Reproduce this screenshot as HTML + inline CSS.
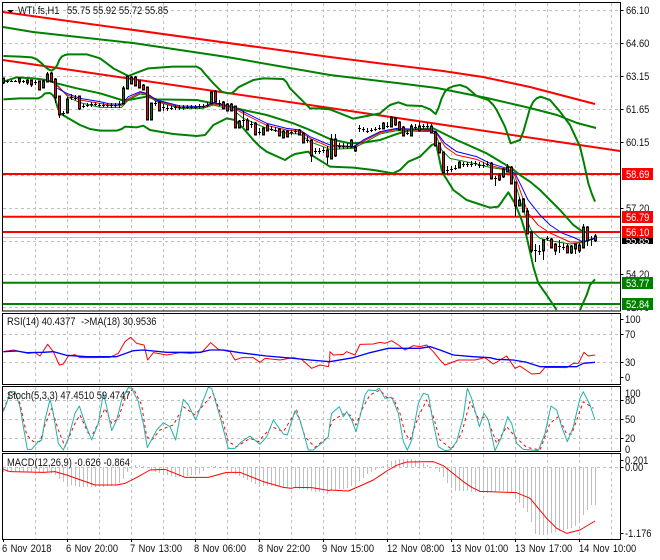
<!DOCTYPE html>
<html><head><meta charset="utf-8"><title>WTI.fs,H1</title>
<style>
html,body{margin:0;padding:0;background:#fff;width:660px;height:560px;overflow:hidden}
svg{display:block}
text{font-family:"Liberation Sans",sans-serif;font-size:11px;fill:#111;transform-box:fill-box;transform-origin:0 50%;transform:scaleX(.85)}
.l{fill:#fff}
.t{word-spacing:1px}
polyline,path{stroke-linejoin:round}
</style></head><body>
<svg width="660" height="560" viewBox="0 0 660 560" xmlns="http://www.w3.org/2000/svg">
<rect width="660" height="560" fill="#fff"/>
<!-- grid -->
<g stroke="#c0c0c0" stroke-width="1" stroke-dasharray="3 3" fill="none">
<path d="M35.5 3V311M67.5 3V311M99.5 3V311M131.5 3V311M163.5 3V311M195.5 3V311M227.5 3V311M259.5 3V311M291.5 3V311M323.5 3V311M355.5 3V311M387.5 3V311M419.5 3V311M451.5 3V311M483.5 3V311M515.5 3V311M547.5 3V311M579.5 3V311M611.5 3V311"/>
<path d="M35.5 313V384M67.5 313V384M99.5 313V384M131.5 313V384M163.5 313V384M195.5 313V384M227.5 313V384M259.5 313V384M291.5 313V384M323.5 313V384M355.5 313V384M387.5 313V384M419.5 313V384M451.5 313V384M483.5 313V384M515.5 313V384M547.5 313V384M579.5 313V384M611.5 313V384"/>
<path d="M35.5 387V451M67.5 387V451M99.5 387V451M131.5 387V451M163.5 387V451M195.5 387V451M227.5 387V451M259.5 387V451M291.5 387V451M323.5 387V451M355.5 387V451M387.5 387V451M419.5 387V451M451.5 387V451M483.5 387V451M515.5 387V451M547.5 387V451M579.5 387V451M611.5 387V451"/>
<path d="M35.5 454V539M67.5 454V539M99.5 454V539M131.5 454V539M163.5 454V539M195.5 454V539M227.5 454V539M259.5 454V539M291.5 454V539M323.5 454V539M355.5 454V539M387.5 454V539M419.5 454V539M451.5 454V539M483.5 454V539M515.5 454V539M547.5 454V539M579.5 454V539M611.5 454V539"/>
<path d="M3 10.5H620M3 43.5H620M3 76.5H620M3 109.5H620M3 142.5H620M3 175.5H620M3 208.5H620M3 241.5H620M3 274.5H620M3 307.5H620"/>
<path d="M3 334.5H620M3 362.5H620M3 400.5H620M3 419.5H620M3 438.5H620M3 467.5H620"/>
</g>
<!-- MACD histogram -->
<path stroke="#c0c0c0" stroke-width="1" fill="none" d="M3.5 467V472M7.5 467V472M11.5 467V472M15.5 467V472M19.5 467V472M23.5 467V472M27.5 467V472M31.5 467V472M35.5 467V472M39.5 467V472M43.5 467V472M47.5 467V472M51.5 467V473M55.5 467V475M59.5 467V479M63.5 467V482M67.5 467V484M71.5 467V485M75.5 467V486M79.5 467V487M83.5 467V487M87.5 467V487M91.5 467V487M95.5 467V487M99.5 467V487M103.5 467V487M107.5 467V486M111.5 467V486M115.5 467V485M119.5 467V483M123.5 467V479M127.5 467V472M131.5 467V468M135.5 467V465M139.5 467V465M143.5 467V466M147.5 467V468M151.5 467V470M155.5 467V472M159.5 467V473M163.5 467V473M167.5 467V475M171.5 467V476M175.5 467V477M179.5 467V477M183.5 467V477M187.5 467V476M191.5 467V475M195.5 467V475M199.5 467V474M203.5 467V471M207.5 467V468M211.5 467V466M215.5 467V466M219.5 467V467M223.5 467V468M227.5 467V470M231.5 467V472M235.5 467V474M239.5 467V476M243.5 467V478M247.5 467V480M251.5 467V482M255.5 467V484M259.5 467V485M263.5 467V486M267.5 467V486M271.5 467V486M275.5 467V486M279.5 467V486M283.5 467V487M287.5 467V488M291.5 467V488M295.5 467V488M299.5 467V489M303.5 467V489M307.5 467V490M311.5 467V491M315.5 467V492M319.5 467V492M323.5 467V493M327.5 467V494M331.5 467V491M335.5 467V490M339.5 467V489M343.5 467V489M347.5 467V488M351.5 467V486M355.5 467V485M359.5 467V481M363.5 467V478M367.5 467V474M371.5 467V472M375.5 467V470M379.5 467V468M383.5 467V466M387.5 467V464M391.5 467V461M395.5 467V460M399.5 467V459M403.5 467V459M407.5 467V459M411.5 467V459M415.5 467V460M419.5 467V461M423.5 467V463M427.5 467V465M431.5 467V467M435.5 467V469M439.5 467V472M443.5 467V477M447.5 467V483M451.5 467V488M455.5 467V491M459.5 467V491M463.5 467V491M467.5 467V491M471.5 467V492M475.5 467V492M479.5 467V492M483.5 467V493M487.5 467V493M491.5 467V492M495.5 467V492M499.5 467V491M503.5 467V491M507.5 467V492M511.5 467V493M515.5 467V498M519.5 467V503M523.5 467V508M527.5 467V512M531.5 467V522M535.5 467V534M539.5 467V535M543.5 467V535M547.5 467V534M551.5 467V533M555.5 467V532M559.5 467V531M563.5 467V530M567.5 467V529M571.5 467V528M575.5 467V526M579.5 467V520M583.5 467V515M587.5 467V510M591.5 467V505M595.5 467V505"/>
<!-- trend lines -->
<g fill="none" stroke-width="2">
<path stroke="#f00" d="M3 12L330 57L377 63L443 71L483 77L530 87L595 104"/>
<path stroke="#f00" d="M3 60L330 108L620 151"/>
<path stroke="#008000" d="M3 27L33 32L133 43L227 57L330 75L397 83L437 88L487 98L530 108L557 115L577 123L596 128"/>
<path stroke="#f00" d="M3 174H620M3 216.7H620M3 232H620"/>
<path stroke="#008000" d="M3 282.7H620M3 304H620"/>
</g>
<path stroke="#c0c0c0" stroke-width="1" d="M3 237.5H620"/>
<!-- Bollinger bands (zoom coords) -->
<g fill="none" stroke="#008000" stroke-width="6" transform="scale(.33333)">
<polyline points="10,168 60,170 95,172 110,178 125,190 135,200 145,208 155,212 165,205 172,195 178,180 185,170 195,165 205,163 260,163 300,175 340,205 365,218 385,228 410,218 445,205 520,200 590,200 603,207 615,222 640,250 665,275 680,279 695,280 705,272 715,262 760,240 790,235 850,237 860,247 870,265 900,295 930,325 955,325 990,328"/>
<polyline points="10,298 60,295 115,295 125,290 135,280 150,279 158,285 165,295 172,320 180,340 240,375 270,387 300,392 350,392 365,387 375,380 410,382 430,377 450,390 520,402 590,408 615,405 628,390 640,375 680,355 705,360 730,385 760,420 780,440 800,455 855,480 870,470 885,462 925,455 935,465 950,475 990,500"/>
<polyline points="10,245 50,232 100,235 140,240 170,250 230,265 300,280 365,300 385,300 440,290 470,298 590,300 640,310 690,320 730,330 800,345 880,370 930,390 990,417"/>
</g>
<g fill="none" stroke="#008000" stroke-width="6" transform="translate(330 0) scale(.33333)">
<polyline points="-1,328 30,340 70,356 110,348 150,340 165,327 180,315 205,307 230,316 275,318 300,328 317,342 325,325 335,295 345,275 355,265 372,258 390,255 410,262 425,275 440,288 475,300 490,315 500,330 525,380 542,430 570,420 580,395 590,360 600,325 610,305 620,295 632,290 660,300 690,335 720,375 750,440 762,490 775,550 785,580 795,605"/>
<polyline points="-1,500 70,503 130,510 190,520 210,510 235,485 270,470 305,435 318,430 335,510 345,530 370,570 410,600 480,623 505,620 535,577 555,610 575,660 590,710 610,800 625,850 650,885 680,930"/>
<polyline points="750,930 770,885 780,855 795,838"/>
<polyline points="-1,417 60,430 100,428 150,420 200,402 250,388 310,385 380,420 470,460 545,505 570,525 600,545 630,570 690,630 730,675 765,700"/>
</g>
<!-- moving averages -->
<g fill="none" stroke-width="1" transform="scale(.33333)">
<polyline stroke="#008000" stroke-width="3" points="172,255 205,292 240,308 300,322 365,322 385,300 420,282 440,285 470,305 540,325 610,325 640,315 700,330 730,355 800,385 860,400 900,402 930,425 990,448"/>
<polyline stroke="#f00" stroke-width="3" points="172,258 200,284 240,300 300,310 330,316 365,316 385,296 420,278 440,282 470,302 540,322 610,322 640,311 700,324 740,346 800,376 860,390 900,394 930,415 990,442"/>
<polyline stroke="#00f" stroke-width="3" points="172,265 200,280 240,295 300,305 330,312 365,312 385,290 420,275 440,280 470,300 540,318 610,320 640,308 700,320 740,340 800,370 860,385 900,390 930,410 990,435"/>
</g>
<g fill="none" transform="translate(330 0) scale(.33333)">
<polyline stroke="#008000" stroke-width="3" points="0,448 70,445 100,430 150,402 200,392 300,395 318,405 335,450 360,475 440,492 480,502 530,510 550,530 565,580 579,630 603,690 630,715 660,722 720,732 756,728 795,716"/>
<polyline stroke="#f00" stroke-width="3" points="0,440 70,442 100,424 150,398 200,388 300,392 318,398 345,440 380,465 440,478 480,497 530,508 555,528 575,585 594,639 624,675 660,699 720,726 756,726 795,714"/>
<polyline stroke="#00f" stroke-width="3" points="0,435 70,440 100,420 150,395 200,385 300,390 318,395 345,430 380,455 440,470 480,490 530,505 555,520 575,560 594,600 630,645 660,675 696,699 735,714 759,726 795,714"/>
</g>
<!-- candle wicks -->
<path stroke="#000" stroke-width="1" fill="none" d="M3.5 78V84M7.5 80V83M11.5 80V82M15.5 80V82M19.5 78V84M23.5 80V83M27.5 79V85M31.5 80V87M35.5 80V85M39.5 81V90M43.5 80V87M47.5 72V82M51.5 72V82M55.5 78V103M59.5 96V118M63.5 111V116M67.5 97V113M71.5 94V100M75.5 95V100M79.5 96V110M83.5 104V108M87.5 103V107M91.5 102V107M95.5 102V106M99.5 103V107M103.5 103V107M107.5 103V107M111.5 103V108M115.5 103V108M119.5 101V108M123.5 86V104M127.5 76V89M131.5 76V84M135.5 76V86M139.5 81V88M143.5 84V90M147.5 87V120M151.5 103V120M155.5 101V106M159.5 101V111M163.5 104V111M167.5 105V111M171.5 106V110M175.5 105V110M179.5 105V110M183.5 105V110M187.5 105V109M191.5 105V109M195.5 105V109M199.5 104V109M203.5 104V108M207.5 102V107M211.5 91V104M215.5 90V102M219.5 100V106M223.5 101V109M227.5 103V111M231.5 103V111M235.5 106V128M239.5 120V128M243.5 111V127M247.5 118V130M251.5 121V128M255.5 122V135M259.5 128V135M263.5 127V135M267.5 124V131M271.5 126V131M275.5 127V132M279.5 128V136M283.5 130V138M287.5 130V137M291.5 130V135M295.5 129V134M299.5 129V135M303.5 132V143M307.5 136V143M311.5 139V162M315.5 148V154M319.5 148V154M323.5 147V153M327.5 146V164M331.5 134V159M335.5 134V157M339.5 143V149M343.5 143V149M347.5 143V149M351.5 139V148M355.5 146V152M359.5 125V132M363.5 127V132M367.5 128V133M371.5 128V132M375.5 127V131M379.5 125V130M383.5 122V129M387.5 122V128M391.5 116V127M395.5 117V126M399.5 121V130M403.5 126V136M407.5 130V135M411.5 124V136M415.5 124V130M419.5 122V131M423.5 124V129M427.5 122V129M431.5 124V133M435.5 131V146M439.5 143V153M443.5 152V173M447.5 166V175M451.5 166V172M455.5 165V170M459.5 161V168M463.5 162V167M467.5 162V167M471.5 161V167M475.5 161V166M479.5 162V168M483.5 162V168M487.5 161V166M491.5 162V179M495.5 176V186M499.5 173V181M503.5 168V178M507.5 164V172M511.5 166V184M515.5 182V217M519.5 197V206M523.5 198V212M527.5 208V234M531.5 231V253M535.5 244V262M539.5 245V255M543.5 240V260M547.5 236V241M551.5 238V248M555.5 243V255M559.5 240V253M563.5 243V250M567.5 244V250M571.5 245V254M575.5 245V254M579.5 243V253M583.5 224V248M587.5 226V246M591.5 236V246M595.5 234V242"/>
<path stroke="#000" stroke-width="1" d="M6 81.5h3M10 81.5h3M14 81.5h3M22 81.5h3M34 82.5h3M62 113.5h3M70 97.5h3M74 98.5h3M82 106.5h3M86 105.5h3M90 104.5h3M94 104.5h3M98 105.5h3M102 105.5h3M106 105.5h3M110 105.5h3M114 105.5h3M118 104.5h3M154 103.5h3M162 107.5h3M166 108.5h3M170 108.5h3M174 107.5h3M178 107.5h3M182 107.5h3M186 107.5h3M190 107.5h3M194 107.5h3M198 106.5h3M202 106.5h3M206 105.5h3M218 103.5h3M242 120.5h3M250 124.5h3M258 132.5h3M270 129.5h3M274 130.5h3M290 132.5h3M294 131.5h3M306 140.5h3M314 151.5h3M318 151.5h3M322 150.5h3M338 146.5h3M342 146.5h3M346 146.5h3M358 128.5h3M362 129.5h3M366 131.5h3M370 130.5h3M374 129.5h3M378 128.5h3M386 126.5h3M406 133.5h3M414 127.5h3M422 126.5h3M426 126.5h3M446 170.5h3M450 169.5h3M454 168.5h3M462 164.5h3M466 164.5h3M470 164.5h3M474 163.5h3M478 165.5h3M482 165.5h3M486 164.5h3M494 178.5h3M534 250.5h3M538 251.5h3M546 238.5h3M558 246.5h3M562 247.5h3M566 247.5h3M578 247.5h3M590 239.5h3"/>
<defs>
<path id="rb" d="M19.5 79V81M31.5 81V84M39.5 82V89M51.5 74V81M55.5 80V97M59.5 97V114M79.5 97V108M135.5 78V85M139.5 82V87M143.5 86V89M147.5 88V119M159.5 103V110M223.5 103V108M227.5 105V110M215.5 92V101M235.5 107V127M247.5 121V129M255.5 124V134M267.5 126V130M279.5 130V135M287.5 132V136M299.5 131V134M303.5 134V142M311.5 141V155M327.5 151V156M335.5 140V155M355.5 148V150M395.5 119V124M399.5 123V129M403.5 128V135M431.5 127V132M435.5 133V145M439.5 144V152M443.5 153V172M491.5 164V178M499.5 176V179M511.5 168V183M515.5 183V205M527.5 212V233M531.5 233V250M551.5 240V247M555.5 245V250M567.5 247V252M579.5 246V250M587.5 228V240"/>
<path id="gb" d="M3.5 79V82M27.5 81V82M43.5 82V87M47.5 75V81M67.5 100V112M123.5 89V103M127.5 77V88M131.5 78V83M151.5 104V119M211.5 93V103M231.5 105V110M239.5 122V127M263.5 129V134M283.5 132V137M331.5 140V158M351.5 141V146M383.5 124V128M391.5 118V126M411.5 127V135M419.5 127V130M459.5 163V167M503.5 170V176M507.5 168V171M519.5 201V205M523.5 200V211M543.5 241V250M571.5 247V252M575.5 245V248M583.5 228V247M595.5 237V240"/>
</defs>
<use href="#rb" stroke="#000" stroke-width="3" stroke-linecap="square" fill="none"/>
<use href="#gb" stroke="#000" stroke-width="3" stroke-linecap="square" fill="none"/>
<use href="#rb" stroke="#f00" stroke-width="1" fill="none"/>
<use href="#gb" stroke="#008000" stroke-width="1" fill="none"/>
<!-- RSI -->
<g fill="none" transform="translate(0 310) scale(.33333)">
<polyline stroke="#f00" stroke-width="3" points="10,125 40,120 85,130 105,128 120,138 143,103 160,125 178,165 190,162 205,138 225,134 240,143 280,143 330,142 355,130 375,95 392,82 410,100 432,105 443,150 460,128 500,135 540,128 570,130 605,127 632,98 655,118 690,125 705,150 725,143 760,143 780,157 795,145 840,150 880,143 905,148 935,175 960,165 985,170 990,145"/>
<polyline stroke="#00f" stroke-width="4" points="10,125 50,123 80,128 130,127 160,125 200,136 260,140 350,140 400,122 430,120 500,127 600,127 630,120 670,120 720,128 800,138 880,145 930,150 990,155"/>
</g>
<g fill="none" transform="translate(330 310) scale(.33333)">
<polyline stroke="#f00" stroke-width="3" points="-1,145 0,125 10,135 40,133 50,125 75,135 90,103 130,102 150,97 165,100 185,92 205,105 225,120 250,107 270,110 290,105 310,125 330,150 345,165 385,150 435,150 465,143 490,162 530,138 555,175 570,168 605,192 630,190 645,172 710,173 730,160 745,160 762,127 775,138 795,135"/>
<polyline stroke="#00f" stroke-width="4" points="-1,155 70,143 120,128 175,115 270,115 300,110 330,120 370,135 430,140 480,143 500,148 550,150 590,157 630,170 740,170 760,160 795,157"/>
</g>
<!-- Stoch -->
<g fill="none" transform="translate(0 310) scale(.33333)">
<polyline stroke="#f00" stroke-width="3" stroke-dasharray="9 9" points="10,300 25,265 45,250 60,280 80,375 100,395 120,395 135,345 155,295 175,360 195,410 225,340 240,315 265,370 280,370 315,295 335,340 355,325 375,265 400,235 425,285 440,380 455,390 480,360 520,345 550,290 585,315 615,280 640,250 665,320 685,395 710,410 750,385 775,395 815,350 850,365 890,300 915,380 945,412 985,380"/>
<polyline stroke="#20b2aa" stroke-width="3" points="10,305 20,280 30,245 45,245 60,290 70,350 82,418 95,418 115,395 125,390 135,330 150,268 158,300 175,400 190,420 205,385 225,310 238,288 255,340 275,390 295,340 310,250 320,290 335,362 350,330 365,270 385,233 395,235 415,275 430,340 442,413 470,360 490,338 510,350 527,390 550,268 565,285 587,330 610,270 625,232 635,235 660,320 685,415 705,415 725,395 750,378 780,403 800,380 820,330 850,372 862,375 885,302 900,330 925,420 940,420 970,395 985,380 990,340"/>
</g>
<g fill="none" transform="translate(330 310) scale(.33333)">
<polyline stroke="#f00" stroke-width="3" stroke-dasharray="9 9" points="0,350 10,330 40,312 60,315 78,345 100,290 120,255 150,240 170,262 190,265 210,310 225,370 240,390 265,320 290,270 310,320 330,390 365,418 395,370 420,275 445,325 470,320 500,400 530,350 560,385 590,412 630,420 660,340 685,320 710,372 725,372 760,275 790,295"/>
<polyline stroke="#20b2aa" stroke-width="3" points="0,340 5,310 28,290 40,320 50,305 65,330 78,365 90,320 105,255 115,240 135,242 148,235 165,265 185,262 205,310 220,395 232,420 245,390 265,280 280,250 295,255 310,340 325,410 345,422 360,420 380,395 400,320 412,235 425,265 448,350 462,310 475,330 495,422 515,380 533,320 545,340 560,400 580,418 625,422 645,370 663,288 680,300 695,350 712,395 730,350 750,265 760,245 780,285 795,330"/>
</g>
<!-- MACD line -->
<g fill="none" stroke="#f00" stroke-width="3">
<polyline transform="translate(0 450) scale(.33333)" points="10,58 30,65 130,67 165,65 200,75 285,105 350,105 375,100 400,88 450,60 495,58 555,82 625,82 680,67 720,67 790,95 850,112 875,115 885,112 935,113 990,122"/>
<polyline transform="translate(330 450) scale(.33333)" points="0,120 55,123 90,108 130,90 175,60 200,46 230,36 310,35 340,47 400,95 425,112 450,124 560,128 600,145 650,205 680,235 710,250 750,240 795,213"/>
</g>
<!-- frames -->
<g fill="none" stroke="#000" stroke-width="1">
<rect x="2.5" y="2.5" width="618" height="308.5"/>
<rect x="2.5" y="313.5" width="618" height="71"/>
<rect x="2.5" y="386.5" width="618" height="65"/>
<rect x="2.5" y="453.5" width="618" height="86"/>
<path d="M620.5 10.5h3M620.5 43.5h3M620.5 76.5h3M620.5 109.5h3M620.5 142.5h3M620.5 208.5h3M620.5 274.5h3M620.5 319.5h3M620.5 334.5h3M620.5 362.5h3M620.5 377.5h3M620.5 400.5h3M620.5 419.5h3M620.5 438.5h3M620.5 460.5h3M620.5 467.5h3M620.5 533.5h3"/>
<path d="M3.5 539v3M67.5 539v3M131.5 539v3M195.5 539v3M259.5 539v3M323.5 539v3M387.5 539v3M451.5 539v3M515.5 539v3M579.5 539v3"/>
</g>
<!-- header -->
<path d="M7 10h7l-3.5 3z" fill="#000"/>
<text x="18" y="14">WTI.fs,H1</text>
<text x="67" y="14">55.75 55.92 55.72 55.85</text>
<text x="7" y="325">RSI(14) 40.4377</text>
<text x="81" y="325">-&gt;MA(18) 30.9536</text>
<text x="7" y="399">Stoch(5,3,3) 47.4510 59.4747</text>
<text x="7" y="466">MACD(12,26,9) -0.626 -0.864</text>
<!-- axis labels -->
<text x="626" y="14">66.10</text>
<text x="626" y="47">64.60</text>
<text x="626" y="80">63.15</text>
<text x="626" y="113">61.65</text>
<text x="626" y="146">60.15</text>
<text x="626" y="212">57.20</text>
<text x="626" y="244">55.70</text>
<text x="626" y="278">54.20</text>
<text x="626" y="311">52.70</text>
<rect x="622" y="237" width="31" height="7" fill="#000"/>
<text class="l" x="626" y="244">55.85</text>
<rect x="622" y="168" width="31" height="12" fill="#f00"/><text class="l" x="626" y="178">58.69</text>
<rect x="622" y="211" width="31" height="12" fill="#f00"/><text class="l" x="626" y="221">56.79</text>
<rect x="622" y="226" width="31" height="12" fill="#f00"/><text class="l" x="626" y="236">56.10</text>
<rect x="622" y="277" width="31" height="12" fill="#008000"/><text class="l" x="626" y="287">53.77</text>
<rect x="622" y="298" width="31" height="12" fill="#008000"/><text class="l" x="626" y="308">52.84</text>
<text x="625" y="323">100</text>
<text x="625" y="338">70</text>
<text x="625" y="366">30</text>
<text x="625" y="381">0</text>
<text x="625" y="397">100</text>
<text x="625" y="404">80</text>
<text x="625" y="423">50</text>
<text x="625" y="442">20</text>
<text x="625" y="453">0</text>
<text x="625" y="464">0.201</text>
<text x="625" y="471">0.00</text>
<text x="625" y="537">-1.176</text>
<text class="t" x="2" y="552">6 Nov 2018</text>
<text class="t" x="66" y="552">6 Nov 20:00</text>
<text class="t" x="130" y="552">7 Nov 13:00</text>
<text class="t" x="194" y="552">8 Nov 06:00</text>
<text class="t" x="258" y="552">8 Nov 22:00</text>
<text class="t" x="322" y="552">9 Nov 15:00</text>
<text class="t" x="387" y="552">12 Nov 08:00</text>
<text class="t" x="451" y="552">13 Nov 01:00</text>
<text class="t" x="515" y="552">13 Nov 17:00</text>
<text class="t" x="579" y="552">14 Nov 10:00</text>
</svg>
</body></html>
